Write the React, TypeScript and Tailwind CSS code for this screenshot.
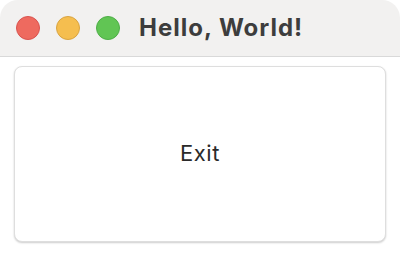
export default function App() {
	return (
		<div className="flex h-[256px] w-[400px] flex-col bg-white font-['Inter',sans-serif]">
			<header className="flex h-[57px] shrink-0 items-center gap-4 rounded-t-[18px] border-b border-[#d9d9d9] bg-[#f2f1f0] pl-4">
				<div className="flex gap-4">
					<span className="size-6 rounded-full border border-[#d9534f] bg-[#ee6a5f]" />
					<span className="size-6 rounded-full border border-[#d9a441] bg-[#f5be4f]" />
					<span className="size-6 rounded-full border border-[#4eae47] bg-[#61c554]" />
				</div>
				<h1 className="ml-[3px] text-[24px] font-bold tracking-[1px] text-[#3d3d3d]">Hello, World!</h1>
			</header>
			<main className="flex-1 px-[14px] pt-[9px] pb-[14px]">
				<button className="flex h-full w-full items-center justify-center rounded-[8px] border border-[#dedede] bg-white pb-[2px] text-[22px] tracking-[0.5px] text-[#2a2a2a] shadow-[0_1px_2px_rgba(0,0,0,0.2)]">
					Exit
				</button>
			</main>
		</div>
	);
}
